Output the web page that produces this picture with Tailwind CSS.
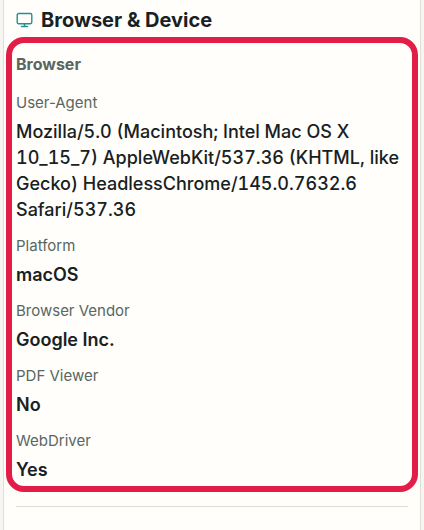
<!DOCTYPE html>
<html lang="en">
  <head>
    <meta charset="UTF-8" />
    <meta name="viewport" content="width=device-width, initial-scale=1.0" />
    <title>Browser & Device</title>
    <script src="https://cdn.jsdelivr.net/npm/@tailwindcss/browser@4"></script>
  </head>
  <body class="bg-[#f6f5f1] font-['Inter',sans-serif] text-[#18211f]">
    <main class="ml-[3px] mr-[3px] min-h-screen border-x border-[#dedfd7] bg-[#fffefa] px-3">
      <h2 class="flex items-center gap-2 pt-1.5 text-xl leading-7 font-bold">
        <svg class="size-[17px]" viewBox="0 0 17 17" fill="none" stroke="#219090" stroke-width="1.4" stroke-linecap="round" stroke-linejoin="round" aria-hidden="true">
          <rect x="1.2" y="1.5" width="14.6" height="10.2" rx="1.4" />
          <path d="M8.5 11.7v2.8M5.5 14.5h6" />
        </svg>
        Browser & Device
      </h2>
      <section class="-mx-2.5 mt-[3px] rounded-[18px] border-6 border-[#e21d48] px-1 pt-2.5 pb-[3px]">
        <h3 class="text-base leading-[22px] font-bold text-[#586762]">Browser</h3>
        <dl class="mt-[17px] flex flex-col gap-3">
          <div class="flex flex-col gap-[5px]">
            <dt class="text-[15px] leading-[22px] text-[#586762]">User-Agent</dt>
            <dd class="text-lg leading-[26px] font-medium tabular-nums">Mozilla/5.0 (Macintosh; Intel Mac OS X 10_15_7) AppleWebKit/537.36 (KHTML, like Gecko) HeadlessChrome/145.0.7632.6 Safari/537.36</dd>
          </div>
          <div class="flex flex-col gap-[5px]">
            <dt class="text-[15px] leading-[22px] text-[#586762]">Platform</dt>
            <dd class="text-lg leading-[26px] font-semibold">macOS</dd>
          </div>
          <div class="flex flex-col gap-[5px]">
            <dt class="text-[15px] leading-[22px] text-[#586762]">Browser Vendor</dt>
            <dd class="text-lg leading-[26px] font-semibold">Google Inc.</dd>
          </div>
          <div class="flex flex-col gap-[5px]">
            <dt class="text-[15px] leading-[22px] text-[#586762]">PDF Viewer</dt>
            <dd class="text-lg leading-[26px] font-semibold">No</dd>
          </div>
          <div class="flex flex-col gap-[5px]">
            <dt class="text-[15px] leading-[22px] text-[#586762]">WebDriver</dt>
            <dd class="text-lg leading-[26px] font-semibold">Yes</dd>
          </div>
        </dl>
      </section>
      <hr class="mt-3.5 border-[#dedfd2]" />
    </main>
  </body>
</html>
